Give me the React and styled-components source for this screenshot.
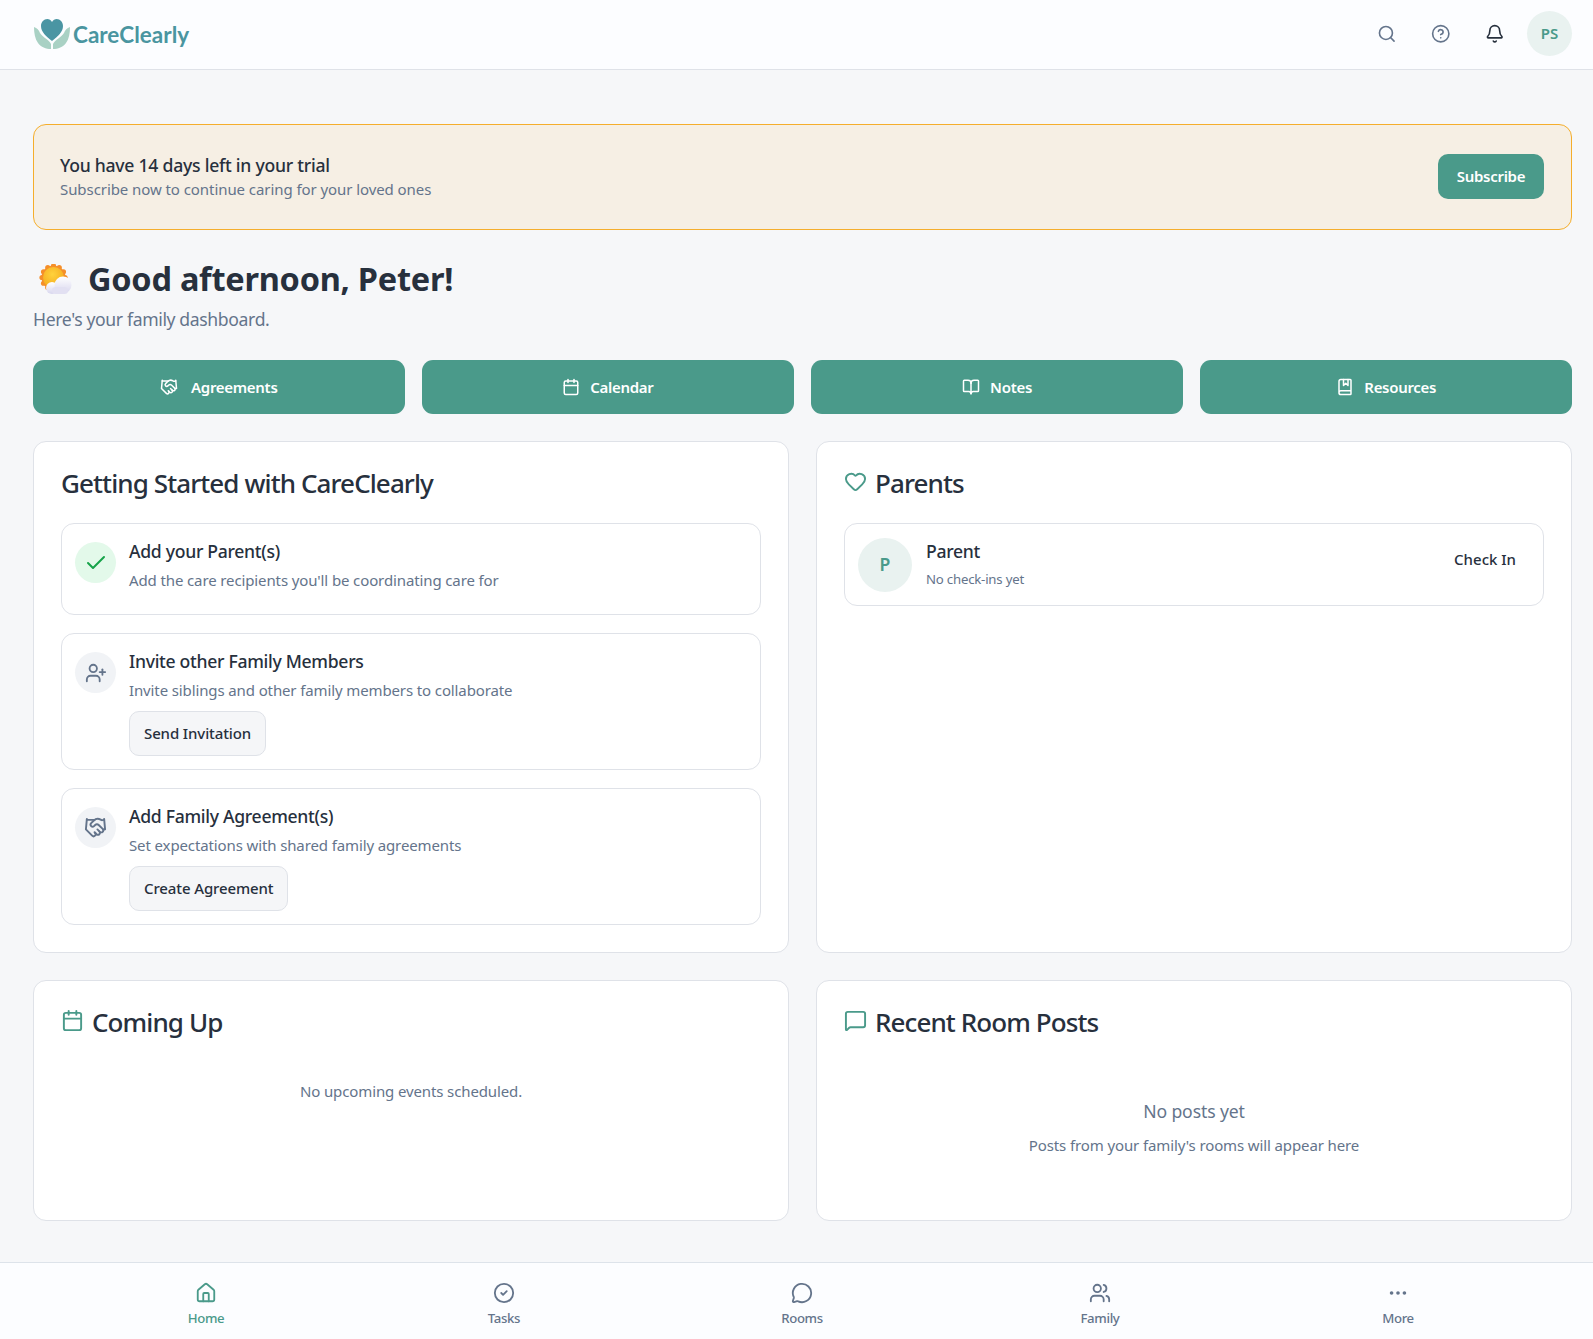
import React from "react"
import styled, { createGlobalStyle } from "styled-components"
import {
  Search,
  CircleHelp,
  Bell,
  Handshake,
  Calendar,
  BookOpen,
  BookMarked,
  Check,
  UserPlus,
  Heart,
  MessageSquare,
  House,
  CircleCheck,
  MessageCircle,
  Users,
  Ellipsis,
} from "lucide-react"

const GlobalStyle = createGlobalStyle`
  * { box-sizing: border-box; }
  html, body {
    margin: 0;
    background: #f6f7f9;
    overflow-x: hidden;
  }
  body {
    font-family: "Noto Sans", "Open Sans", sans-serif;
    color: #27303d;
  }
`

const Page = styled.div`
  width: 1593px;
  height: 1339px;
  display: flex;
  flex-direction: column;
  overflow: hidden;
`

const TopBar = styled.header`
  height: 70px;
  flex: none;
  background: #fcfdff;
  border-bottom: 1px solid #dfe2e8;
  padding: 0 21px 2px 33px;
  display: flex;
  align-items: center;
  justify-content: space-between;
`

const Brand = styled.div`
  display: flex;
  align-items: center;
  gap: 2px;
  margin-top: 1px;
`

const BrandName = styled.span`
  font-family: "Lato", sans-serif;
  font-size: 22.5px;
  font-weight: 700;
  color: #4a95a0;
`

const TopActions = styled.div`
  display: flex;
  align-items: center;
`

const TopIcon = styled.span`
  width: 54px;
  display: flex;
  justify-content: center;
  color: ${p => p.$dark ? "#27303d" : "#64748b"};
`

const TopIconGroup = styled.div`
  display: flex;
  margin-right: 5px;
`

const Avatar = styled.div`
  width: ${p => p.$size}px;
  height: ${p => p.$size}px;
  flex: none;
  padding-bottom: 2px;
  border-radius: 50%;
  background: #e9f2f0;
  color: #4a9a8a;
  font-weight: 600;
  font-size: ${p => p.$font}px;
  display: flex;
  align-items: center;
  justify-content: center;
`

const Main = styled.main`
  flex: 1;
  padding: 54px 21px 0 33px;
`

const TrialBanner = styled.section`
  height: 106px;
  background: #f6efe4;
  border: 1px solid #f5ae2c;
  border-radius: 13px;
  padding: 0 27px 0 26px;
  display: flex;
  align-items: center;
  justify-content: space-between;
`

const BannerTitle = styled.div`
  font-size: 17.6px;
  font-weight: 500;
  line-height: 24px;
  letter-spacing: -0.25px;
`

const BannerText = styled.div`
  font-size: 15px;
  line-height: 24px;
  letter-spacing: -0.07px;
  color: #64748b;
`

const PrimaryButton = styled.button`
  width: 106px;
  height: 45px;
  margin-top: -2px;
  border: none;
  border-radius: 10px;
  background: #4a9a8a;
  color: #fff;
  font: 600 15px "Noto Sans", sans-serif;
  letter-spacing: -0.3px;
`

const Greeting = styled.div`
  display: flex;
  align-items: center;
  gap: 16px;
  margin-top: 26px;
  height: 44px;
  padding-left: 6px;
  svg { margin-top: 2px; }
`

const GreetingTitle = styled.h1`
  margin: 0;
  font-size: 32.5px;
  font-weight: 700;
  letter-spacing: -0.25px;
`

const Subtitle = styled.p`
  margin: 6px 0 0;
  font-size: 17.6px;
  line-height: 26px;
  letter-spacing: -0.37px;
  color: #64748b;
`

const QuickLinks = styled.nav`
  display: grid;
  grid-template-columns: repeat(4, 1fr);
  gap: 17.6px;
  margin-top: 28px;
`

const QuickLink = styled.a`
  height: 54px;
  border-radius: 11px;
  background: #4a9a8a;
  color: #fff;
  font-size: 15px;
  font-weight: 600;
  letter-spacing: -0.3px;
  display: flex;
  align-items: center;
  justify-content: center;
  gap: ${p => p.$gap || 10}px;
`

const CardGrid = styled.div`
  display: grid;
  grid-template-columns: 1fr 1fr;
  gap: 27px;
  margin-top: 27px;
`

const Card = styled.section`
  height: ${p => p.$height}px;
  background: #fff;
  border: 1px solid #dfe2e8;
  border-radius: 13px;
  padding: 27px;
`

const CardTitle = styled.h2`
  margin: 0 0 25px;
  height: 29px;
  font-size: 26px;
  font-weight: 500;
  line-height: 29px;
  letter-spacing: -0.9px;
  display: flex;
  align-items: center;
  gap: 8px;
  svg { color: #4a9a8a; margin-top: -4px; }
`

const StepList = styled.div`
  display: flex;
  flex-direction: column;
  gap: 18px;
`

const Step = styled.div`
  height: ${p => p.$height}px;
  border: 1px solid #dfe2e8;
  border-radius: 13px;
  padding: 17px 13px;
  display: flex;
  gap: 13px;
`

const StepIcon = styled.div`
  width: 41px;
  height: 41px;
  flex: none;
  margin-top: 1px;
  border-radius: 50%;
  background: ${p => p.$done ? "#e3f9ea" : "#f1f3f6"};
  color: ${p => p.$done ? "#16a34a" : "#64748b"};
  display: flex;
  align-items: center;
  justify-content: center;
`

const ItemName = styled.div`
  font-size: 17.6px;
  font-weight: 500;
  line-height: 20px;
  letter-spacing: -0.3px;
`

const ItemText = styled.div`
  margin-top: 8px;
  font-size: 15px;
  line-height: 22px;
  letter-spacing: -0.12px;
  color: #64748b;
`

const OutlineButton = styled.button`
  display: block;
  margin-top: 10px;
  height: 45px;
  padding: 0 14px 2px;
  background: #f5f6f8;
  border: 1px solid #dfe2e8;
  border-radius: 10px;
  color: #27303d;
  font: 500 15px "Noto Sans", sans-serif;
  letter-spacing: -0.12px;
`

const ParentRow = styled.div`
  height: 83px;
  border: 1px solid #dfe2e8;
  border-radius: 13px;
  padding: 0 27px 0 13px;
  display: flex;
  align-items: center;
  gap: 14px;
`

const ParentInfo = styled.div`
  flex: 1;
`

const ParentMeta = styled.div`
  margin-top: 9px;
  font-size: 13.2px;
  line-height: 18px;
  letter-spacing: -0.2px;
  color: #64748b;
`

const CheckIn = styled.span`
  margin-bottom: 11px;
  font-size: 15px;
  font-weight: 500;
`

const EmptyText = styled.p`
  margin: 0;
  text-align: center;
  font-size: ${p => p.$size || 15}px;
  line-height: 24px;
  letter-spacing: -0.12px;
  color: #64748b;
  padding-top: ${p => p.$top || 0}px;
`

const BottomNav = styled.nav`
  height: 77px;
  flex: none;
  background: #fcfdff;
  border-top: 1px solid #dde3ea;
  padding: 0 46px 0 57px;
  display: grid;
  grid-template-columns: repeat(5, 1fr);
`

const NavItem = styled.a`
  display: flex;
  flex-direction: column;
  align-items: center;
  padding-top: 19px;
  gap: 5px;
  font-size: 13.2px;
  font-weight: 500;
  letter-spacing: -0.35px;
  color: ${p => p.$active ? "#4a9a8a" : "#64748b"};
`

function LogoMark() {
  return (
    <svg width="38" height="32" viewBox="0 0 38 32">
      <path d="M1 9c3 1 5 3 6 6 1 2 3 3 5 5 3 2 5 4 6 6v5c-5 0-10-2-13-6C2 21 1 15 1 9Z" fill="#a9d1c4" />
      <path d="M37 9c-3 1-5 3-6 6-1 2-3 3-5 5-3 2-5 4-6 6v5c5 0 10-2 13-6 3-4 4-10 4-16Z" fill="#a9d1c4" />
      <path d="M19 23C13 18 8 14 8 8c0-4 3-7 6.200-7 2 0 3.800 1 4.800 3 1-2 2.800-3 4.800-3C27 1 30 4 30 8c0 6-5 10-11 15Z" fill="#4a95a3" />
    </svg>
  )
}

const sunBumps = Array.from({ length: 12 }, (_, i) => (i * Math.PI) / 6)

function SunCloud() {
  return (
    <svg width="33" height="30" viewBox="0 0 33 30">
      <defs>
        <radialGradient id="sunFill" cx="45%" cy="35%" r="65%">
          <stop offset="0%" stopColor="#ffd23c" />
          <stop offset="100%" stopColor="#f5ab1e" />
        </radialGradient>
        <linearGradient id="cloudFill" x1="0" y1="0" x2="0" y2="1">
          <stop offset="0%" stopColor="#ffffff" />
          <stop offset="100%" stopColor="#d8d6ee" />
        </linearGradient>
      </defs>
      {sunBumps.map(a => (
        <circle key={a} cx={14.5 + Math.cos(a) * 11.5} cy={13.5 + Math.sin(a) * 11.5} r="2.6" fill="#f58f2a" />
      ))}
      <circle cx="14.5" cy="13.5" r="12" fill="#f58f2a" />
      <circle cx="14.5" cy="13.500" r="10.500" fill="url(#sunFill)" />
      <circle cx="13" cy="24" r="6" fill="url(#cloudFill)" />
      <circle cx="24" cy="21" r="8.500" fill="url(#cloudFill)" />
      <rect x="13" y="23" width="16" height="7" rx="3.500" fill="#e2e0f2" />
    </svg>
  )
}

export default function App() {
  return (
    <Page>
      <GlobalStyle />
      <TopBar>
        <Brand>
          <LogoMark />
          <BrandName>CareClearly</BrandName>
        </Brand>
        <TopActions>
          <TopIconGroup>
            <TopIcon><Search size={19.5} /></TopIcon>
            <TopIcon><CircleHelp size={19.5} /></TopIcon>
            <TopIcon $dark><Bell size={19.5} /></TopIcon>
          </TopIconGroup>
          <Avatar $size={45} $font={15}>PS</Avatar>
        </TopActions>
      </TopBar>

      <Main>
        <TrialBanner>
          <div>
            <BannerTitle>You have 14 days left in your trial</BannerTitle>
            <BannerText>Subscribe now to continue caring for your loved ones</BannerText>
          </div>
          <PrimaryButton>Subscribe</PrimaryButton>
        </TrialBanner>

        <Greeting>
          <SunCloud />
          <GreetingTitle>Good afternoon, Peter!</GreetingTitle>
        </Greeting>
        <Subtitle>Here's your family dashboard.</Subtitle>

        <QuickLinks>
          <QuickLink $gap={13}><Handshake size={18} />Agreements</QuickLink>
          <QuickLink><Calendar size={18} />Calendar</QuickLink>
          <QuickLink><BookOpen size={18} />Notes</QuickLink>
          <QuickLink><BookMarked size={18} />Resources</QuickLink>
        </QuickLinks>

        <CardGrid>
          <Card $height={512}>
            <CardTitle>Getting Started with CareClearly</CardTitle>
            <StepList>
              <Step $height={92}>
                <StepIcon $done><Check size={24} /></StepIcon>
                <div>
                  <ItemName>Add your Parent(s)</ItemName>
                  <ItemText>Add the care recipients you'll be coordinating care for</ItemText>
                </div>
              </Step>
              <Step $height={137}>
                <StepIcon><UserPlus size={22} /></StepIcon>
                <div>
                  <ItemName>Invite other Family Members</ItemName>
                  <ItemText>Invite siblings and other family members to collaborate</ItemText>
                  <OutlineButton>Send Invitation</OutlineButton>
                </div>
              </Step>
              <Step $height={137}>
                <StepIcon><Handshake size={23} /></StepIcon>
                <div>
                  <ItemName>Add Family Agreement(s)</ItemName>
                  <ItemText>Set expectations with shared family agreements</ItemText>
                  <OutlineButton>Create Agreement</OutlineButton>
                </div>
              </Step>
            </StepList>
          </Card>

          <Card $height={512}>
            <CardTitle><Heart size={23} />Parents</CardTitle>
            <ParentRow>
              <Avatar $size={54} $font={17.6}>P</Avatar>
              <ParentInfo>
                <ItemName>Parent</ItemName>
                <ParentMeta>No check-ins yet</ParentMeta>
              </ParentInfo>
              <CheckIn>Check In</CheckIn>
            </ParentRow>
          </Card>

          <Card $height={241}>
            <CardTitle><Calendar size={23} />Coming Up</CardTitle>
            <EmptyText $top={17}>No upcoming events scheduled.</EmptyText>
          </Card>

          <Card $height={241}>
            <CardTitle><MessageSquare size={23} />Recent Room Posts</CardTitle>
            <EmptyText $size={17.6} $top={37}>No posts yet</EmptyText>
            <EmptyText $top={10}>Posts from your family's rooms will appear here</EmptyText>
          </Card>
        </CardGrid>
      </Main>

      <BottomNav>
        <NavItem $active><House size={22} />Home</NavItem>
        <NavItem><CircleCheck size={22} />Tasks</NavItem>
        <NavItem><MessageCircle size={22} />Rooms</NavItem>
        <NavItem><Users size={22} />Family</NavItem>
        <NavItem><Ellipsis size={22} />More</NavItem>
      </BottomNav>
    </Page>
  )
}
